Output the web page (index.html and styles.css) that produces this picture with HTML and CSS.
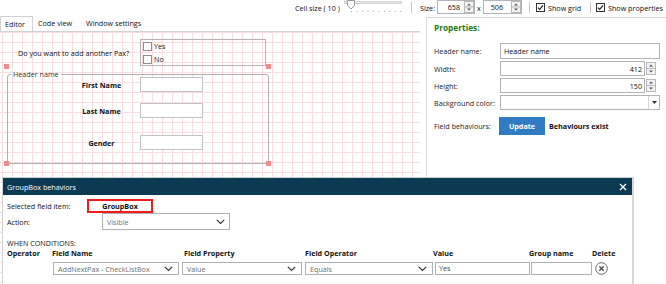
FILE: index.html
```html
<!DOCTYPE html>
<html>
<head>
<meta charset="utf-8">
<link rel="stylesheet" href="styles.css">
</head>
<body>
<div class="toolbar">
  <span class="tb-text cell-label">Cell size ( 10 )</span>
  <svg class="slider" width="58" height="14" viewBox="0 0 58 14">
    <rect x="0.5" y="1.5" width="57" height="2" fill="#e9e9e9" stroke="#d4d4d4"/>
    <path d="M3.5 0.5 H10.5 V5.5 L7 9 L3.5 5.5 Z" fill="#fff" stroke="#9a9a9a"/>
    <g fill="#a8a8a8">
      <rect x="7" y="11" width="1" height="1"/><rect x="12.5" y="11" width="1" height="1"/><rect x="18" y="11" width="1" height="1"/><rect x="23.5" y="11" width="1" height="1"/><rect x="29" y="11" width="1" height="1"/><rect x="34.5" y="11" width="1" height="1"/><rect x="40" y="11" width="1" height="1"/><rect x="45.5" y="11" width="1" height="1"/><rect x="51" y="11" width="1" height="1"/><rect x="56" y="11" width="1" height="1"/>
    </g>
  </svg>
  <span class="sep sep1"></span>
  <span class="tb-text size-label">Size:</span>
  <div class="spin spin1"><span class="spin-val">658</span>
    <svg class="spin-btns" width="10" height="12" viewBox="0 0 10 12"><rect x="0.5" y="0.5" width="9" height="11" fill="#f3f3f3" stroke="#b8b8b8"/><line x1="0" y1="6" x2="10" y2="6" stroke="#b8b8b8"/><path d="M3 4.5 L5 2.5 L7 4.5Z" fill="#555"/><path d="M3 7.5 L5 9.5 L7 7.5Z" fill="#555"/></svg>
  </div>
  <span class="tb-text times">x</span>
  <div class="spin spin2"><span class="spin-val">506</span>
    <svg class="spin-btns" width="10" height="12" viewBox="0 0 10 12"><rect x="0.5" y="0.5" width="9" height="11" fill="#f3f3f3" stroke="#b8b8b8"/><line x1="0" y1="6" x2="10" y2="6" stroke="#b8b8b8"/><path d="M3 4.5 L5 2.5 L7 4.5Z" fill="#555"/><path d="M3 7.5 L5 9.5 L7 7.5Z" fill="#555"/></svg>
  </div>
  <span class="sep sep2"></span>
  <svg class="chk" width="9" height="9" viewBox="0 0 9 9"><rect x="0.5" y="0.5" width="8" height="8" fill="#fff" stroke="#333"/><path d="M2 4.6 L3.7 6.4 L7 2.4" fill="none" stroke="#222" stroke-width="1.2"/></svg>
  <span class="tb-text chk-label grid-label">Show grid</span>
  <span class="sep sep3"></span>
  <svg class="chk" width="9" height="9" viewBox="0 0 9 9"><rect x="0.5" y="0.5" width="8" height="8" fill="#fff" stroke="#333"/><path d="M2 4.6 L3.7 6.4 L7 2.4" fill="none" stroke="#222" stroke-width="1.2"/></svg>
  <span class="tb-text chk-label">Show properties</span>
</div>

<div class="main">
  <div class="editor">
    <div class="tabs">
      <span class="tab tab-active">Editor</span>
      <span class="tab tab-code">Code view</span>
      <span class="tab">Window settings</span>
    </div>
    <div class="canvas">
      <span class="c-item q-label">Do you want to add another Pax?</span>
      <div class="c-item chklist">
        <div class="chk-item"><span class="box"></span><span>Yes</span></div>
        <div class="chk-item"><span class="box"></span><span>No</span></div>
      </div>
      <span class="c-item handle h1"></span>
      <span class="c-item handle h2"></span>
      <fieldset class="c-item groupbox"><legend>Header name</legend></fieldset>
      <span class="c-item handle h3"></span>
      <span class="c-item handle h4"></span>
      <span class="c-item f-label fl1">First Name</span>
      <span class="c-item f-input fi1"></span>
      <span class="c-item f-label fl2">Last Name</span>
      <span class="c-item f-input fi2"></span>
      <span class="c-item f-label fl3">Gender</span>
      <span class="c-item f-input fi3"></span>
    </div>
  </div>

  <div class="props">
    <div class="props-title">Properties:</div>
    <div class="prop-grid">
      <span class="p-label">Header name:</span>
      <div class="p-input p-text">Header name</div>
      <span class="p-label">Width:</span>
      <div class="p-num">
        <div class="p-input p-numbox">412</div>
        <svg class="p-spin" width="10" height="13" viewBox="0 0 10 13"><rect x="0.5" y="0.5" width="9" height="12" fill="#f3f3f3" stroke="#b8b8b8"/><line x1="0" y1="6.5" x2="10" y2="6.5" stroke="#b8b8b8"/><path d="M3 4.5 L5 2.5 L7 4.5Z" fill="#555"/><path d="M3 8.5 L5 10.5 L7 8.5Z" fill="#555"/></svg>
      </div>
      <span class="p-label">Height:</span>
      <div class="p-num">
        <div class="p-input p-numbox">150</div>
        <svg class="p-spin" width="10" height="13" viewBox="0 0 10 13"><rect x="0.5" y="0.5" width="9" height="12" fill="#f3f3f3" stroke="#b8b8b8"/><line x1="0" y1="6.5" x2="10" y2="6.5" stroke="#b8b8b8"/><path d="M3 4.5 L5 2.5 L7 4.5Z" fill="#555"/><path d="M3 8.5 L5 10.5 L7 8.5Z" fill="#555"/></svg>
      </div>
      <span class="p-label">Background color:</span>
      <div class="p-input p-select"><span class="p-dd"><svg width="5" height="3" viewBox="0 0 5 3"><path d="M0 0 H5 L2.5 3Z" fill="#333"/></svg></span></div>
    </div>
    <div class="fb-row">
      <span class="p-label">Field behaviours:</span>
      <span class="update-btn">Update</span>
      <span class="exists">Behaviours exist</span>
    </div>
  </div>
</div>

<div class="dialog">
  <div class="dlg-head">
    <span class="dlg-title">GroupBox behaviors</span>
    <svg class="dlg-close" width="8" height="8" viewBox="0 0 8 8"><path d="M1 1 L7 7 M7 1 L1 7" stroke="#fff" stroke-width="1.4"/></svg>
  </div>
  <div class="dlg-body">
    <div class="d-row d-row1">
      <span class="d-label sel-label">Selected field item:</span>
      <span class="redbox">GroupBox</span>
    </div>
    <div class="d-row d-row2">
      <span class="d-label act-label">Action:</span>
      <div class="d-select action-sel"><span class="muted">Visible</span>
        <svg class="chev" width="9" height="6" viewBox="0 0 9 6"><path d="M0.8 0.8 L4.5 4.5 L8.2 0.8" fill="none" stroke="#333" stroke-width="1.2"/></svg>
      </div>
    </div>
    <div class="when">WHEN CONDITIONS:</div>
    <div class="cond-grid">
      <span class="ch">Operator</span>
      <span class="ch">Field Name</span>
      <span class="ch ch-prop">Field Property</span>
      <span class="ch ch-op">Field Operator</span>
      <span class="ch ch-val">Value</span>
      <span class="ch ch-grp">Group name</span>
      <span class="ch ch-del">Delete</span>

      <span></span>
      <div class="d-select c-sel"><span class="muted">AddNextPax - CheckListBox</span>
        <svg class="chev" width="9" height="6" viewBox="0 0 9 6"><path d="M0.8 0.8 L4.5 4.5 L8.2 0.8" fill="none" stroke="#333" stroke-width="1.2"/></svg>
      </div>
      <div class="d-select c-sel"><span class="muted">Value</span>
        <svg class="chev" width="9" height="6" viewBox="0 0 9 6"><path d="M0.8 0.8 L4.5 4.5 L8.2 0.8" fill="none" stroke="#333" stroke-width="1.2"/></svg>
      </div>
      <div class="d-select c-sel"><span class="muted">Equals</span>
        <svg class="chev" width="9" height="6" viewBox="0 0 9 6"><path d="M0.8 0.8 L4.5 4.5 L8.2 0.8" fill="none" stroke="#333" stroke-width="1.2"/></svg>
      </div>
      <div class="d-input c-val">Yes</div>
      <div class="d-input c-grp"></div>
      <svg class="del" width="13" height="13" viewBox="0 0 13 13"><circle cx="6.5" cy="6.5" r="5.8" fill="#fff" stroke="#666" stroke-width="1"/><path d="M4.3 4.3 L8.7 8.7 M8.7 4.3 L4.3 8.7" stroke="#555" stroke-width="1.5"/></svg>
    </div>
  </div>
</div>
</body>
</html>
```

FILE: styles.css
```css
html, body {
  margin: 0;
  padding: 0;
  width: 666px;
  height: 284px;
  overflow: hidden;
  background: #fff;
  font-family: "Open Sans", "Noto Sans", sans-serif;
  font-size: 7.2px;
  color: #111;
}

/* ---------- toolbar ---------- */
.toolbar {
  display: flex;
  align-items: center;
  height: 15px;
  padding-left: 295px;
  white-space: nowrap;
}
.tb-text { flex: none; line-height: 10px; color: #111; }
.cell-label { width: 49px; }
.slider { flex: none; margin-top: -1px; }
.sep { flex: none; width: 1px; height: 11px; background: #c4c4c4; }
.sep1 { margin-left: 9px; margin-right: 8px; }
.size-label { width: 17px; }
.spin {
  flex: none;
  box-sizing: border-box;
  height: 14px;
  margin-top: -1px;
  border: 1px solid #b0b3b8;
  background: #fff;
  display: flex;
  align-items: center;
  justify-content: flex-end;
}
.spin1 { width: 38px; }
.spin2 { width: 39px; }
.spin1 .spin-val { margin-right: 4px; }
.spin2 .spin-val { margin-right: 8px; }
.times { width: 8px; text-align: center; }
.sep2 { margin-left: 7px; margin-right: 6px; }
.chk { flex: none; }
.chk-label { margin-left: 3px; }
.grid-label { width: 42px; }
.sep3 { margin-right: 5px; }

/* ---------- main ---------- */
.main {
  display: flex;
  height: 269px;
}
.editor {
  width: 420px;
  flex: none;
  display: flex;
  flex-direction: column;
}
.tabs {
  display: flex;
  height: 16px;
  margin-top: 1px;
  box-sizing: border-box;
}
.tab {
  box-sizing: border-box;
  height: 15px;
  padding-left: 5px;
  line-height: 14px;
  color: #111;
}
.tab-active {
  width: 33px;
  background: #fff;
  border: 1px solid #d2d2d2;
  border-bottom: none;
  padding-left: 4px;
  height: 16px;
}
.tab-code { width: 48px; }

.canvas {
  position: relative;
  flex: 1;
  border-top: 1px solid #d2d2d2;
  margin-top: -1px;
  background-color: #fff;
  background-image:
    linear-gradient(to right, #f8dede 1px, transparent 1px),
    linear-gradient(to bottom, #f8dede 1px, transparent 1px);
  background-size: 10px 10px;
  background-position: 2px 0;
}
.c-item { position: absolute; }
.q-label { left: 18px; top: 16px; line-height: 10px; color: #111; }
.chklist {
  left: 140px;
  top: 7px;
  width: 126px;
  height: 27px;
  box-sizing: border-box;
  border: 1px solid #b4b4b4;
  padding: 2px 0 0 2px;
  display: flex;
  flex-direction: column;
  gap: 4px;
}
.chk-item { display: flex; align-items: center; gap: 2px; height: 9px; line-height: 9px; }
.chk-item .box {
  width: 9px; height: 9px; box-sizing: border-box;
  border: 1px solid #8e8e8e; background: #fff;
}
.handle {
  width: 5px; height: 5px;
  background: #f28b8b;
  border: 0;
}
.h1 { left: 4px; top: 32px; }
.h2 { left: 266px; top: 32px; }
.h3 { left: 4px; top: 129px; }
.h4 { left: 266px; top: 129px; }
.groupbox {
  left: 7px;
  top: 37px;
  width: 262px;
  height: 95px;
  box-sizing: border-box;
  margin: 0;
  padding: 0;
  border: 1px solid #b0b0b0;
  border-radius: 3px;
}
.groupbox legend {
  padding: 0 2px;
  margin-left: 3px;
  line-height: 10px;
  color: #333;
}
.f-label {
  left: 62px;
  width: 79px;
  text-align: center;
  font-weight: bold;
  line-height: 10px;
  color: #111;
}
.fl1 { top: 48px; }
.fl2 { top: 74px; }
.fl3 { top: 106px; }
.f-input {
  left: 140px;
  width: 63px;
  height: 15px;
  box-sizing: border-box;
  border: 1px solid #c2c2c2;
  background: #fff;
}
.fi1 { top: 45px; }
.fi2 { top: 71px; }
.fi3 { top: 103px; }

/* ---------- properties ---------- */
.props {
  flex: 1;
  margin-left: 6px;
  margin-top: 2px;
  border-left: 1px solid #d8d8d8;
  border-top: 1px solid #d8d8d8;
  padding: 3px 0 0 7px;
}
.props-title {
  font-size: 8.3px;
  font-weight: bold;
  color: #1f7a12;
  line-height: 14px;
}
.prop-grid {
  margin-top: 8px;
  display: grid;
  grid-template-columns: 66px 160px;
  grid-template-rows: 16px 15px 15px 15px;
  row-gap: 2px;
  align-items: center;
}
.p-label { color: #222; line-height: 10px; }
.p-input {
  box-sizing: border-box;
  height: 100%;
  border: 1px solid #b0b3b8;
  background: #fff;
  display: flex;
  align-items: center;
  padding: 0 3px;
  color: #111;
}
.p-text { height: 16px; }
.p-num { display: flex; align-items: center; gap: 1px; height: 15px; }
.p-numbox { width: 145px; justify-content: flex-end; padding-right: 2px; }
.p-select { height: 15px; justify-content: flex-end; padding: 0; }
.p-dd {
  width: 10px; height: 13px;
  border-left: 1px solid #d4d4d4;
  display: flex; align-items: center; justify-content: center;
}
.fb-row {
  display: flex;
  align-items: center;
  margin-top: 7px;
  height: 18px;
}
.fb-row .p-label { width: 65px; }
.update-btn {
  width: 46px;
  height: 18px;
  background: #2f7cc3;
  color: #fff;
  font-weight: bold;
  text-align: center;
  line-height: 18px;
}
.exists { margin-left: 4px; font-weight: bold; color: #111; }

/* ---------- dialog ---------- */
.dialog {
  position: absolute;
  left: 2px;
  top: 177px;
  width: 632px;
  height: 120px;
  background: #fff;
  border: 1px solid #cfcfcf;
  border-right: 2px solid #d8d8d8;
  box-sizing: border-box;
}
.dlg-head {
  height: 17px;
  background: #0c3a53;
  display: flex;
  align-items: center;
  justify-content: space-between;
  padding: 0 5px 0 4px;
}
.dlg-title { color: #fff; line-height: 10px; }
.dlg-close { display: block; }
.dlg-body { padding: 4px 0 0 4px; }
.d-row { display: flex; align-items: center; }
.d-row1 { height: 14px; }
.d-row2 { height: 17px; }
.d-label { color: #111; flex: none; }
.sel-label { width: 80px; }
.act-label { width: 95px; }
.redbox {
  width: 66px;
  height: 14px;
  box-sizing: border-box;
  border: 2px solid #ee1c1c;
  font-weight: bold;
  color: #111;
  text-align: center;
  line-height: 10px;
}
.d-select {
  box-sizing: border-box;
  border: 1px solid #aeb1b6;
  background: #fff;
  display: flex;
  align-items: center;
  justify-content: space-between;
  padding: 0 4px 0 4px;
}
.action-sel { width: 128px; height: 17px; }
.muted { color: #6e6e6e; }
.chev { display: block; flex: none; }
.when { margin-top: 8px; line-height: 10px; color: #111; }
.cond-grid {
  display: grid;
  grid-template-columns: 45px 129px 123px 131px 96px 62px 30px;
  grid-template-rows: 10px 13px;
  row-gap: 4px;
  align-items: center;
}
.ch { font-weight: bold; color: #111; line-height: 10px; }
.ch-prop { padding-left: 3px; }
.ch-op { padding-left: 1px; }
.ch-val { margin-left: -2px; }
.ch-grp { margin-left: -2px; }
.ch-del { margin-left: -1px; }
.c-sel { height: 13px; margin: 0 2px 0 1px; padding-left: 4px; padding-right: 5px; }
.d-input {
  box-sizing: border-box;
  height: 13px;
  border: 1px solid #aeb1b6;
  background: #fff;
  padding-left: 3px;
  line-height: 11px;
  color: #444;
}
.c-val { margin-right: 1px; }
.c-grp { margin-right: 1px; }
.del { display: block; margin-left: 2px; }
```
